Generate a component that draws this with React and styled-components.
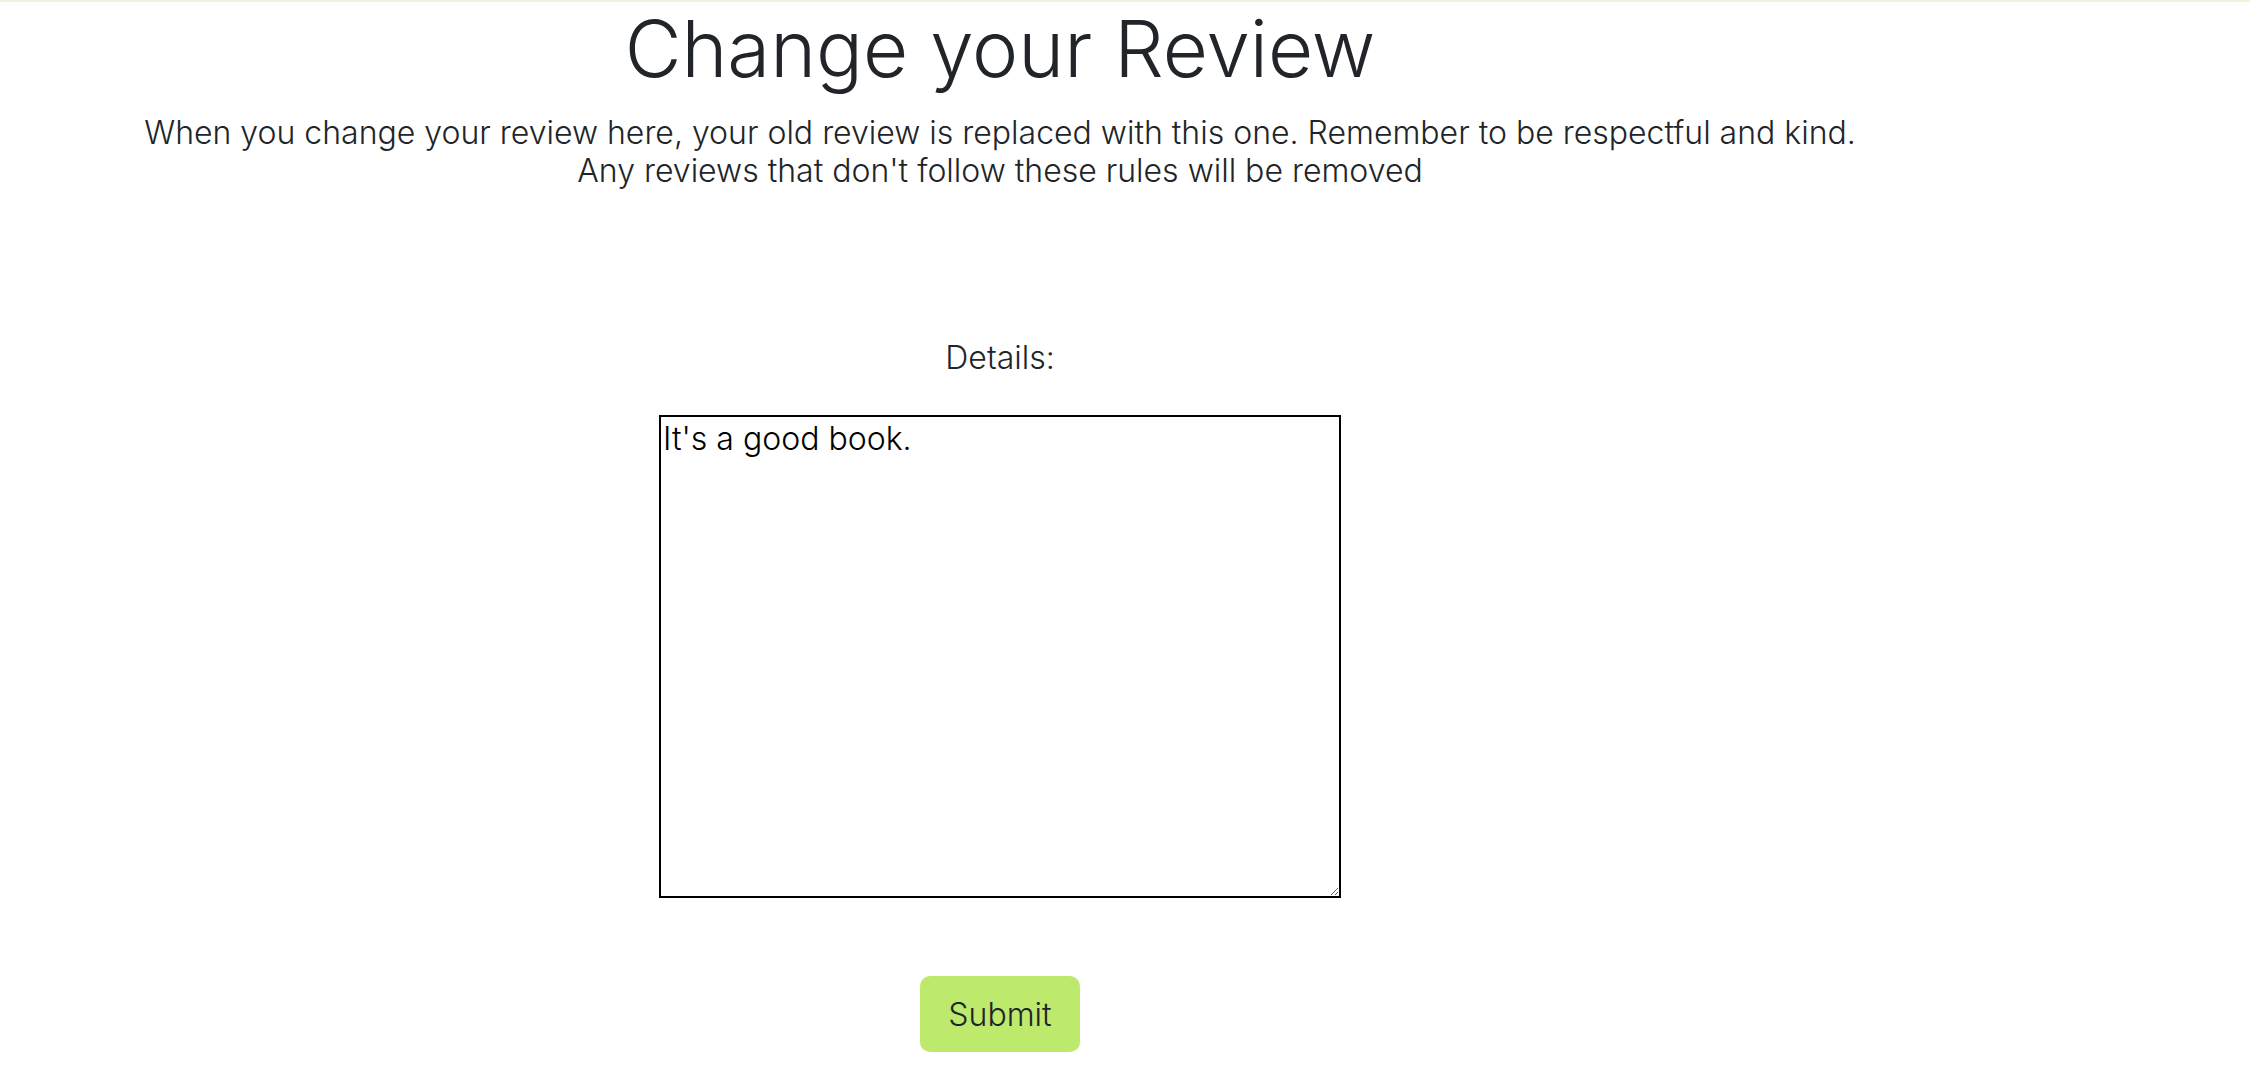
import React, { useState } from 'react';
import styled, { createGlobalStyle } from 'styled-components';

const GlobalStyle = createGlobalStyle`
  body {
    margin: 0;
    background: #fff;
    font-family: Inter, "Open Sans", "Liberation Sans", sans-serif;
    font-weight: 300;
    color: #212529;
  }
`;

function App() {
  const [details, setDetails] = useState("It's a good book.");

  const handleSubmit = (e) => {
    e.preventDefault();
  };

  return (
    <>
      <GlobalStyle />
      <TopBar />
      <Main>
        <Title>Change your Review</Title>
        <Intro>
          When you change your review here, your old review is replaced with this one. Remember to be respectful and kind.
          <br />
          Any reviews that don't follow these rules will be removed
        </Intro>
        <Form onSubmit={handleSubmit}>
          <Label htmlFor="details">Details:</Label>
          <DetailsInput id="details" value={details} onChange={(e) => setDetails(e.target.value)} />
          <SubmitButton type="submit">Submit</SubmitButton>
        </Form>
      </Main>
    </>
  );
}

export default App;

const TopBar = styled.div`
  height: 2px;
  background-color: #f4f1da;
`;

const Main = styled.main`
  width: 2000px;
  display: flex;
  flex-direction: column;
  align-items: center;
  text-align: center;
`;

const Title = styled.h1`
  margin: 0;
  font-size: 78px;
  line-height: 94px;
  font-weight: 300;
`;

const Intro = styled.p`
  margin: 18px 0 0;
  font-size: 32px;
  line-height: 38.4px;
`;

const Form = styled.form`
  display: flex;
  flex-direction: column;
  align-items: center;
  margin-top: 148px;
`;

const Label = styled.label`
  font-size: 32px;
  line-height: 38.4px;
`;

const DetailsInput = styled.textarea`
  box-sizing: border-box;
  width: 682px;
  height: 483px;
  margin-top: 38px;
  padding: 2px;
  border: 2px solid #000;
  font-family: inherit;
  font-weight: 300;
  font-size: 32px;
  color: #000;
  outline: none;
`;

const SubmitButton = styled.button`
  margin-top: 78px;
  width: 160px;
  height: 76px;
  border: 0;
  border-radius: 10px;
  background-color: #bde96c;
  color: #212529;
  font-family: inherit;
  font-weight: 300;
  font-size: 32px;
  cursor: pointer;
`;
